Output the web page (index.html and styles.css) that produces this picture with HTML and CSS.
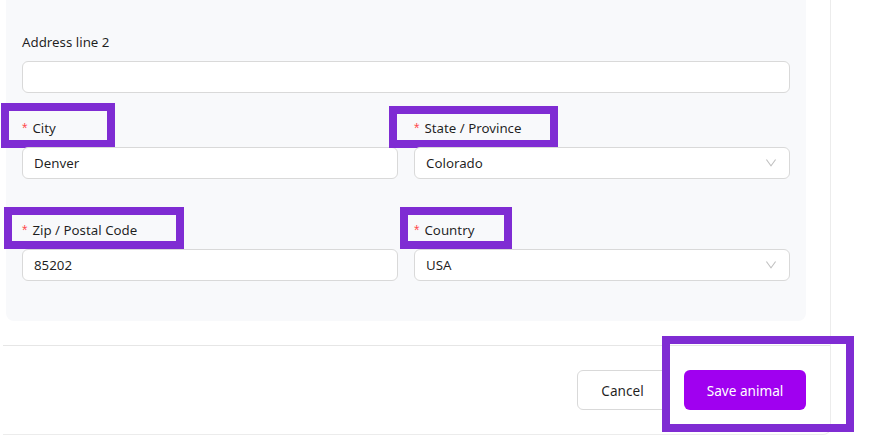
FILE: index.html
```html
<!DOCTYPE html>
<html lang="en">
<head>
<meta charset="utf-8">
<title>Edit animal – address</title>
<link rel="stylesheet" href="styles.css">
</head>
<body>
<div class="card">
  <section class="panel">
    <div class="field field-wide">
      <label class="label">Address line 2</label>
      <div class="input"></div>
    </div>

    <div class="row row-first">
      <div class="field">
        <label class="label"><span class="req">*</span>City<span class="mark mark-city"></span></label>
        <div class="input">Denver</div>
      </div>
      <div class="field">
        <label class="label"><span class="req">*</span>State / Province<span class="mark mark-state"></span></label>
        <div class="input select">Colorado
          <svg class="arrow" viewBox="64 64 896 896" width="12" height="12" aria-hidden="true"><path d="M884 256h-75c-5.1 0-9.9 2.5-12.9 6.6L512 654.2 227.9 262.6c-3-4.1-7.8-6.6-12.9-6.6h-75c-6.5 0-10.3 7.4-6.5 12.7l352.6 486.1c12.8 17.6 39 17.6 51.7 0l352.6-486.1c3.9-5.3.1-12.7-6.4-12.7z"/></svg>
        </div>
      </div>
    </div>

    <div class="row">
      <div class="field">
        <label class="label"><span class="req">*</span>Zip / Postal Code<span class="mark mark-zip"></span></label>
        <div class="input">85202</div>
      </div>
      <div class="field">
        <label class="label"><span class="req">*</span>Country<span class="mark mark-country"></span></label>
        <div class="input select">USA
          <svg class="arrow" viewBox="64 64 896 896" width="12" height="12" aria-hidden="true"><path d="M884 256h-75c-5.1 0-9.9 2.5-12.9 6.6L512 654.2 227.9 262.6c-3-4.1-7.8-6.6-12.9-6.6h-75c-6.5 0-10.3 7.4-6.5 12.7l352.6 486.1c12.8 17.6 39 17.6 51.7 0l352.6-486.1c3.9-5.3.1-12.7-6.4-12.7z"/></svg>
        </div>
      </div>
    </div>
  </section>

  <footer class="footer">
    <button class="btn btn-default" type="button">Cancel</button>
    <button class="btn btn-primary" type="button">Save animal<span class="mark mark-save"></span></button>
  </footer>
</div>
</body>
</html>
```

FILE: styles.css
```css
* {
  box-sizing: border-box;
}

html, body {
  margin: 0;
  background: #ffffff;
}

body {
  font-family: "Noto Sans", "Open Sans", sans-serif;
  font-size: 13.3px;
  color: rgba(0, 0, 0, 0.88);
  width: 890px;
  height: 436px;
  overflow: hidden;
}

/* outer form card */
.card {
  margin-left: 3px;
  width: 828px;
  border-right: 1px solid #ececec;
  border-bottom: 1px solid #ececec;
  border-bottom-right-radius: 8px;
}

/* grey address section */
.panel {
  margin-left: 3px;
  margin-right: 24px;
  padding: 31px 16px 40px;
  background: #f8f9fb;
  border-radius: 0 0 8px 8px;
}

.field {
  display: flex;
  flex-direction: column;
  min-width: 0;
}

.field-wide {
  margin-bottom: 24px;
}

.row {
  display: grid;
  grid-template-columns: 1fr 1fr;
  column-gap: 16px;
}

.row-first {
  margin-bottom: 40px;
}

.label {
  position: relative;
  display: flex;
  align-items: center;
  height: 22px;
  line-height: 22px;
  margin-bottom: 8px;
}

.req {
  color: #ff4d4f;
  font-family: "Liberation Sans", sans-serif;
  font-size: 14px;
  margin-right: 5px;
  line-height: 1;
}

.input {
  position: relative;
  height: 32px;
  line-height: 30px;
  padding: 0 11px;
  background: #ffffff;
  border: 1px solid #d9d9d9;
  border-radius: 6px;
}

.select {
  padding-right: 30px;
}

.arrow {
  position: absolute;
  right: 12px;
  top: 9px;
  fill: rgba(0, 0, 0, 0.25);
}

/* actions */
.footer {
  display: flex;
  justify-content: flex-end;
  gap: 16px;
  margin-top: 24px;
  padding: 24px 24px 24px;
  border-top: 1px solid #e6e6e6;
}

.btn {
  position: relative;
  height: 40px;
  border-radius: 6px;
  font-family: inherit;
  font-size: 13.6px;
  cursor: pointer;
}

.btn-default {
  width: 91px;
  background: #ffffff;
  border: 1px solid #d9d9d9;
  color: rgba(0, 0, 0, 0.88);
}

.btn-primary {
  width: 122px;
  background: #a000f0;
  border: none;
  color: #ffffff;
}

/* highlight frames drawn over labels and the save action */
.mark {
  position: absolute;
  border: 8px solid #7f2cd3;
  pointer-events: none;
}

.mark-city {
  left: -21px;
  top: -14px;
  width: 114px;
  height: 45px;
}

.mark-state {
  left: -25px;
  top: -11px;
  width: 169px;
  height: 42px;
}

.mark-zip {
  left: -18px;
  top: -12px;
  width: 180px;
  height: 42px;
}

.mark-country {
  left: -14px;
  top: -12px;
  width: 112px;
  height: 42px;
}

.mark-save {
  left: -22px;
  top: -34px;
  width: 192px;
  height: 96px;
}
```
